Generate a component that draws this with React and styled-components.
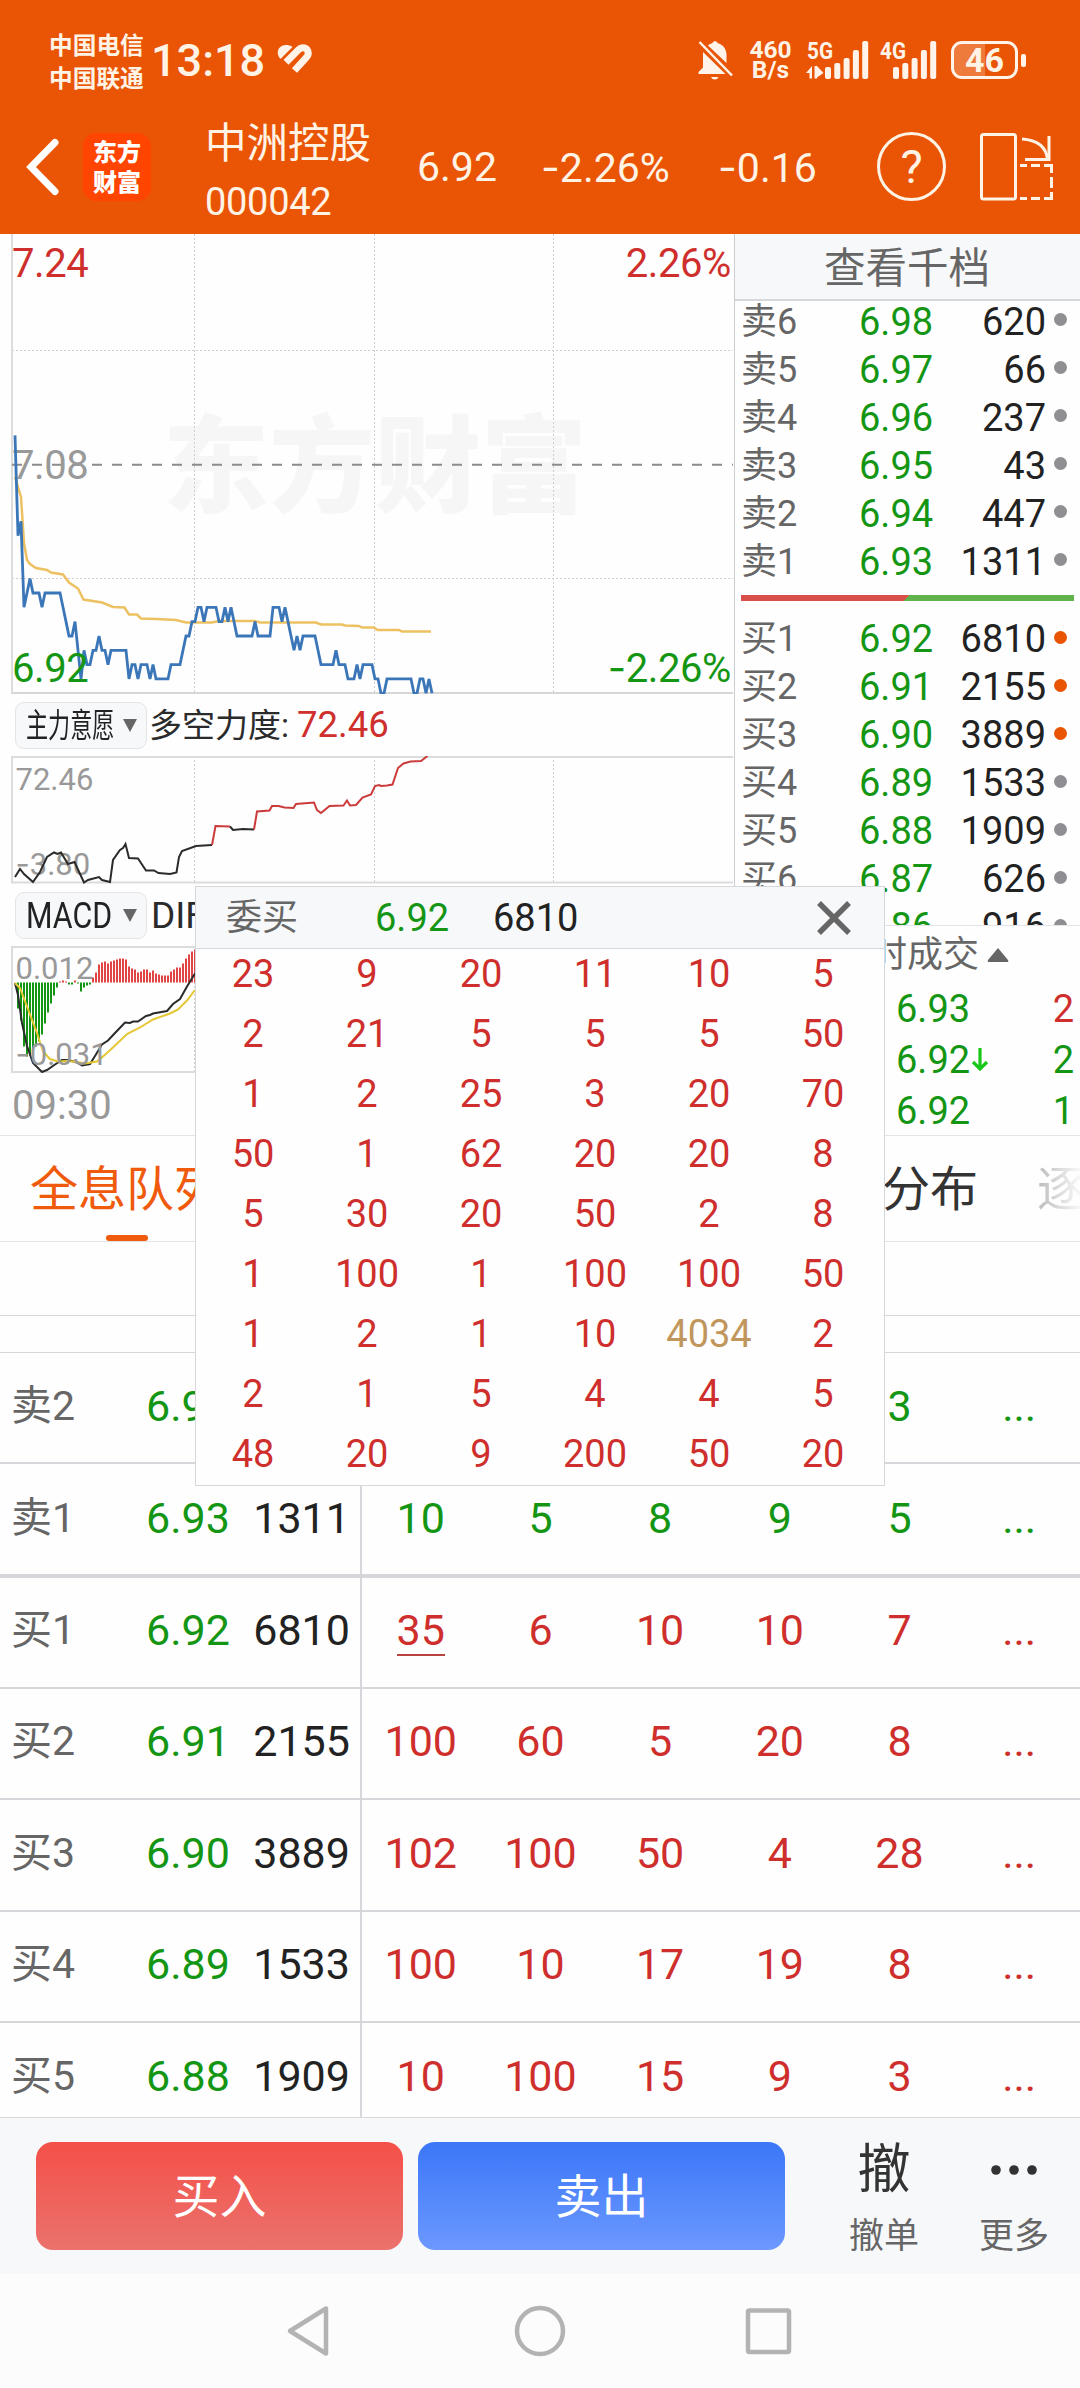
import React, { Fragment } from 'react';
import styled, { createGlobalStyle } from 'styled-components';

const GlobalStyle = createGlobalStyle`
    * { box-sizing : border-box; }
    body {
        margin : 0;
        background : #FEFEFE;
        font-family : Roboto, "Noto Sans CJK SC", sans-serif;
        line-height : 1;
    }
`

// 颜色
const RED = "#CF2F2C";
const GREEN = "#149614";
const GRAY = "#666666";
const LINE = "#D5D7DB";

// 卖盘 / 买盘
const sellList = [
    ["卖6", "6.98", "620"],
    ["卖5", "6.97", "66"],
    ["卖4", "6.96", "237"],
    ["卖3", "6.95", "43"],
    ["卖2", "6.94", "447"],
    ["卖1", "6.93", "1311"],
];
const buyList = [
    ["买1", "6.92", "6810", true],
    ["买2", "6.91", "2155", true],
    ["买3", "6.90", "3889", true],
    ["买4", "6.89", "1533"],
    ["买5", "6.88", "1909"],
    ["买6", "6.87", "626"],
    ["买7", "6.86", "916"],
];

// 全息队列
const queueList = [
    { label : "卖2", price : "6.94", vol : "447", side : "sell", items : ["12", "5", "10", "6", "3"] },
    { label : "卖1", price : "6.93", vol : "1311", side : "sell", items : ["10", "5", "8", "9", "5"], thick : true },
    { label : "买1", price : "6.92", vol : "6810", side : "buy", items : ["35", "6", "10", "10", "7"], active : 0 },
    { label : "买2", price : "6.91", vol : "2155", side : "buy", items : ["100", "60", "5", "20", "8"] },
    { label : "买3", price : "6.90", vol : "3889", side : "buy", items : ["102", "100", "50", "4", "28"] },
    { label : "买4", price : "6.89", vol : "1533", side : "buy", items : ["100", "10", "17", "19", "8"] },
    { label : "买5", price : "6.88", vol : "1909", side : "buy", items : ["10", "100", "15", "9", "3"], last : true },
];

// 弹窗里的委托明细
const orderList = [
    23, 9, 20, 11, 10, 5,
    2, 21, 5, 5, 5, 50,
    1, 2, 25, 3, 20, 70,
    50, 1, 62, 20, 20, 8,
    5, 30, 20, 50, 2, 8,
    1, 100, 1, 100, 100, 50,
    1, 2, 1, 10, 4034, 2,
    2, 1, 5, 4, 4, 5,
    48, 20, 9, 200, 50, 20,
];

// 分时价格,单位为分,每分钟一个点
const prices = [
    710, 703, 704, 698, 699, 700, 699, 699, 699, 698, 699, 699, 699, 699, 699, 699, 698, 697, 696, 696,
    697, 695, 693, 695, 694, 694, 695, 695, 696, 695, 695, 694, 695, 695, 695, 695, 695, 695, 693, 694,
    694, 693, 694, 694, 694, 693, 694, 693, 693, 693, 693, 693, 694, 694, 694, 694, 695, 696, 696, 697,
    697, 698, 698, 697, 698, 698, 698, 698, 697, 697, 698, 697, 698, 697, 696, 696, 696, 696, 696, 696,
    697, 696, 696, 696, 696, 696, 698, 698, 698, 697, 698, 697, 696, 695, 696, 695, 696, 696, 696, 696,
    696, 695, 694, 694, 694, 694, 694, 695, 694, 694, 694, 693, 693, 693, 694, 693, 694, 694, 694, 694,
    693, 693, 692, 692, 693, 693, 693, 693, 693, 693, 693, 693, 693, 692, 692, 693, 693, 692, 693, 692,
];
const pricePoints = prices.map((p, i) => `${15 + i * 3},${459.3 - (p - 692) * 14.33}`).join(" ");

// MACD 柱,正数为红
const macdBars = [
    -26, -38, -64, -74, -73, -71, -64, -59, -52, -41, -30, -21, -13, -5, 1, 2, 1, -2, -2, 2, -1, -9, -5, -3, -2,
    5, 10, 18, 20, 21, 19, 21, 22, 23, 24, 24, 23, 16, 14, 13, 10, 11, 13, 13, 10, 12, 9, 8, 7, 7, 7, 11, 13, 15,
    15, 19, 24, 28, 31, 33, 33, 32,
];

const Minus = () => <MinusText>-</MinusText>;

// 状态栏
const StatusBar = () => (
    <StatusFrame>
        <Carriers>
            <span>中国电信</span>
            <span>中国联通</span>
        </Carriers>
        <Clock>13:18</Clock>
        <svg width="38" height="32" viewBox="0 0 38 32">
            <path d="M3 14.500 C-2 8 2 1 9 1 C11.500 1 13.500 1.500 15.500 3 L4 14.500 Z" fill="#FFF3EA" />
            <path d="M9 18.200 L21.600 5.600 C24 3 28 3 30 5.500 C32 8 31.800 11 29.400 13.400 L17.500 26.500" fill="none" stroke="#FFF3EA" strokeWidth="7" />
        </svg>
        <StatusRight>
            <svg width="38" height="42" viewBox="0 0 38 42">
                <path d="M15.500 4 C16 1.500 20 1.500 20.500 4 C26 5.500 29.500 10 29.500 16 V24 L11 6.500 C12.500 5 14 4.500 15.500 4 Z" fill="#FFF3EA" />
                <path d="M6 13 L28.500 35 H1.500 V33 L6 28.500 Z" fill="#FFF3EA" />
                <path d="M2.500 3 L35 36.500" stroke="#FFF3EA" strokeWidth="2.500" />
                <path d="M14 38 H21.500 A4 4 0 0 1 14 38 Z" fill="#FFF3EA" />
            </svg>
            <NetSpeed>
                <span>460</span>
                <span>B/s</span>
            </NetSpeed>
            <Signal type="5G" arrows />
            <Signal type="4G" />
            <Battery>
                <BatteryFill />
                <BatteryText>46</BatteryText>
            </Battery>
            <BatteryTip />
        </StatusRight>
    </StatusFrame>
);

const Signal = ({ type, arrows }) => (
    <SignalIcon width={arrows ? 62 : 56} height="40" $gap={arrows ? 12 : 0}>
        <text x={arrows ? 1 : 0} y="19" fontSize="24" fontWeight="700" fill="#FFF3EA" textLength="26" lengthAdjust="spacingAndGlyphs">{type}</text>
        {arrows && <path d="M0 33 L6 26 V38.500 H3.500 V33 Z M8.500 26 H11 L17.500 33 L11 37.500 V38.500 H8.500 Z" fill="#FFF3EA" />}
        {[27, 23, 18, 10, 1].map((top, i) => (
            <rect key={top} x={(arrows ? 19 : 13) + i * 9.3} y={top} width="6" height={39 - top} rx="2" fill="#FFF3EA" />
        ))}
    </SignalIcon>
);

// 顶部标题栏
const TitleBar = () => (
    <TitleFrame>
        <svg width="36" height="60" viewBox="0 0 36 60">
            <path d="M30 5.500 L6 30 L30 54.500" fill="none" stroke="#FFF" strokeWidth="7" strokeLinecap="round" />
        </svg>
        <Logo>
            <span>东方</span>
            <span>财富</span>
        </Logo>
        <StockName>
            <Name>中洲控股</Name>
            <Code>000042</Code>
        </StockName>
        <Quote $w={124}>6.92</Quote>
        <Quote $w={177}><Minus />2.26%</Quote>
        <Quote $w={159}><Minus />0.16</Quote>
        <HelpIcon>?</HelpIcon>
        <svg width="76" height="70" viewBox="0 0 76 70" fill="none" stroke="#FFF3E6" strokeWidth="3">
            <rect x="2.500" y="2.500" width="34" height="64.500" rx="2" />
            <path d="M43 7 C58 8 67 15 68.500 27" />
            <path d="M70 4 V27.500 H46" />
            <path d="M41 33.500 H48 M52 33.500 H61 M65 33.500 H72.500 V41 M72.500 45 V56 M72.500 60 V66.500 H65 M61 66.500 H52 M48 66.500 H41" />
        </svg>
    </TitleFrame>
);

const GridLines = ({ height }) => (
    <g stroke="#CFCFCF" strokeWidth="1" strokeDasharray="2 2">
        <path d={`M194.500 0 V${height} M374.500 0 V${height} M553.500 0 V${height}`} />
    </g>
);

// 分时图
const PriceChart = () => (
    <Chart width="734" height="460" viewBox="0 0 734 460">
        <Watermark x="375" y="270" textAnchor="middle">东方财富</Watermark>
        <GridLines height={459} />
        <path d="M12 116.500 H733 M12 344.500 H733" stroke="#CFCFCF" strokeDasharray="2 2" />
        <path d="M12 0 V460" stroke="#DCDCDC" strokeWidth="2" />
        <path d="M12 459 H733" stroke="#D6D6D6" strokeWidth="2" />
        <path d="M12 230.700 H733" stroke="#8C8C8C" strokeWidth="2" strokeDasharray="10 10" />
        <AxisText x="12" y="42.500" fill={RED}>7.24</AxisText>
        <AxisText x="12" y="245" fill="#999">7.08</AxisText>
        <AxisText x="731" y="42.500" fill={RED} textAnchor="end">2.26%</AxisText>
        <polyline
            points="15,243 18,253 21,263 24,309 27,326 30,330 36,334 47,336 51,338.500 63,340.500 69,348.500 78,354.500 83.500,365.500 102,368.500 113,373 124.500,373.500 129,380.500 137,380.500 141,384.500 156,385 176,386 186,388.500 212,388.500 219,387 255,387 260,388.500 316,388.500 321,390.500 342,390.500 345,391.500 359,392 362,393.500 374,393.500 377.500,396 399,396 402,397.500 431,397.500"
            fill="none" stroke="#EDC161" strokeWidth="2.500"
        />
        <polyline points={pricePoints} fill="none" stroke="#3B76B8" strokeWidth="2.800" />
        <AxisText x="12" y="447.500" fill={GREEN}>6.92</AxisText>
        <AxisText x="731" y="447.500" fill={GREEN} textAnchor="end"><tspan fontFamily="Inter">-</tspan>2.26%</AxisText>
    </Chart>
);

// 多空力度
const ForceChart = () => (
    <Chart width="734" height="128" viewBox="0 0 734 128">
        <GridLines height={127} />
        <path d="M733 1 H12 V126.500 H733" fill="none" stroke="#DCDCDC" strokeWidth="2" />
        <AxisText x="15.500" y="33.500" $small fill="#999">72.46</AxisText>
        <AxisText x="15.500" y="119" $small fill="#999"><tspan fontFamily="Inter">-</tspan>3.80</AxisText>
        <g fill="none" stroke="#2B2B2B" strokeWidth="2">
            <polyline points="15,121 20,113 24,118 33,126 40,116 47,101 54,96.500 57.500,98 61,96.500 68,108 74.500,106 84,126.500 88,124 99,121 102,124 110,126 113,104 120,94 123,92 125.500,88 129,102 138,102.500 146,114.500 154,114.500 158.500,117 170,118 176.500,116.500 179,101 182,95 196,90 212,89" />
            <polyline points="230,70.500 233,74 243,73 254,73.500" />
        </g>
        <g fill="none" stroke="#CC3B3B" strokeWidth="2">
            <polyline points="212,89 215.500,70 230,70.500" />
            <polyline points="254,73.500 257,55.500 269.500,54.500 272,50 278.500,50 284.500,51.500 293.500,52 296,48 314,46.500 317,54 321,57 329.500,50 343.500,49.500 347,44.500 350,49.500 356,49 362.500,41.500 371,38.500 375,30 379,29 381,30 387,29.500 392.500,28.500 398,12 403.500,7.500 410.500,5.500 421,5 427.500,0" />
        </g>
    </Chart>
);

// MACD
const MacdChart = () => (
    <Chart width="734" height="127" viewBox="0 0 734 127">
        <GridLines height={126} />
        <path d="M733 1 H12 V126 H733" fill="none" stroke="#DCDCDC" strokeWidth="2" />
        {macdBars.map((v, i) => (
            <rect key={i} x={17 + i * 3} y={v > 0 ? 36.5 - v : 36.5} width="2" height={Math.abs(v)} fill={v > 0 ? "#E04444" : GREEN} />
        ))}
        <polyline points="15,37 18,49 22,77 27,100 33,117 42,126 47,124 55,118.500 62,114 68,114 77,116.500 82,119.500 90,118 95,110 102,98.500 108,94.500 115,87 125,76.500 130,77 133,75.500 138,75.500 146,70 150,69 153,67.500 167,65 173,58 180,53 187,40.500 195,27.500" fill="none" stroke="#2B2B2B" strokeWidth="2" />
        <polyline points="15,37 20,42 27,60.500 37,87 43,105.500 50,113 58,115.500 67,115 77,116 85,117.500 97,115.500 107,107 115,99.500 127,88 140,81.500 153,73.500 170,67.500 178,63.500 187,54.500 195,44" fill="none" stroke="#E6C733" strokeWidth="2" />
        <AxisText x="15.500" y="32.500" $small fill="#999">0.012</AxisText>
        <AxisText x="15.500" y="119" $small fill="#999"><tspan fontFamily="Inter">-</tspan>0.031</AxisText>
    </Chart>
);

// 指标选择按钮
const IndicatorButton = ({ text, scale }) => (
    <PickButton>
        <PickText $scale={scale}>{text}</PickText>
        <svg width="14" height="13" viewBox="0 0 14 13"><path d="M0 0 H14 L7 13 Z" fill={GRAY} /></svg>
    </PickButton>
);

const PriceRow = ({ row }) => (
    <RowFrame>
        <RowLabel>{row[0]}</RowLabel>
        <RowPrice>{row[1]}</RowPrice>
        <RowVol>{row[2]}</RowVol>
        <Dot $on={row[3]} />
    </RowFrame>
);

// 右侧五档
const DepthPanel = () => (
    <DepthFrame>
        <DepthHeader>查看千档</DepthHeader>
        <DepthList>
            {sellList.map((row) => <PriceRow key={row[0]} row={row} />)}
            <RatioBar />
            {buyList.map((row) => <PriceRow key={row[0]} row={row} />)}
        </DepthList>
        <DealFrame>
            <DealTitle>
                分时成交
                <svg width="22" height="14" viewBox="0 0 22 14"><path d="M11 0 L21 12 Q22 14 20 14 H2 Q0 14 1 12 Z" fill={GRAY} /></svg>
            </DealTitle>
            <DealRow><DealPrice>6.93</DealPrice><DealVol $color={RED}>2</DealVol></DealRow>
            <DealRow>
                <DealPrice>
                    6.92
                    <svg width="18" height="24" viewBox="0 0 18 24"><path d="M9 0 V21 M2 14 L9 21 L16 14" fill="none" stroke="#18C818" strokeWidth="3.200" /></svg>
                </DealPrice>
                <DealVol $color={GREEN}>2</DealVol>
            </DealRow>
            <DealRow><DealPrice>6.92</DealPrice><DealVol $color={GREEN}>1</DealVol></DealRow>
        </DealFrame>
    </DepthFrame>
);

// 委买明细弹窗
const OrderPopup = () => (
    <PopupFrame>
        <PopupHeader>
            <PopupTitle>委买</PopupTitle>
            <PopupPrice>6.92</PopupPrice>
            <PopupVol>6810</PopupVol>
            <svg width="34" height="34" viewBox="0 0 34 34"><path d="M2 2 L32 32 M32 2 L2 32" stroke={GRAY} strokeWidth="5.500" /></svg>
        </PopupHeader>
        <OrderGrid>
            {orderList.map((n, i) => <OrderCell key={i} $big={n > 1000}>{n}</OrderCell>)}
        </OrderGrid>
    </PopupFrame>
);

const QueueRow = ({ row }) => (
    <QueueFrame $thick={row.thick} $last={row.last} $side={row.side}>
        <QueueLeft>
            <QueueLabel>{row.label}</QueueLabel>
            <QueuePrice>{row.price}</QueuePrice>
            <QueueVol>{row.vol}</QueueVol>
        </QueueLeft>
        {row.items.map((n, i) => (
            <QueueCell key={i} $side={row.side}>
                {row.active === i ? <ActiveNum>{n}</ActiveNum> : n}
            </QueueCell>
        ))}
        <QueueCell $side={row.side}>...</QueueCell>
    </QueueFrame>
);

const App = () => {
    return (
        <Fragment>
            <GlobalStyle />
            <Page>
                <Header>
                    <StatusBar />
                    <TitleBar />
                </Header>

                {/* 图表 + 五档 */}
                <Main>
                    <ChartColumn>
                        <PriceChart />
                        <IndicatorBar>
                            <IndicatorButton text="主力意愿" scale={0.67} />
                            <IndicatorText>多空力度:</IndicatorText>
                            <IndicatorValue>72.46</IndicatorValue>
                        </IndicatorBar>
                        <ForceChart />
                        <IndicatorBar>
                            <IndicatorButton text="MACD" scale={0.82} />
                            <IndicatorText $latin>DIF</IndicatorText>
                        </IndicatorBar>
                        <MacdChart />
                        <TimeText>09:30</TimeText>
                    </ChartColumn>
                    <DepthPanel />
                </Main>

                {/* 标签页 */}
                <Tabs>
                    <Tab $active>全息队列</Tab>
                    <Tab>分布</Tab>
                    <FadeTab>逐</FadeTab>
                </Tabs>
                <Blank $h={74} />
                <Blank $h={37} />

                <QueueList>
                    {queueList.map((row) => <QueueRow key={row.label} row={row} />)}
                </QueueList>

                {/* 底部操作 */}
                <BottomBar>
                    <TradeButton $from="#F45048" $to="#EB726D">买入</TradeButton>
                    <TradeButton $from="#3B77F8" $to="#6C98FF">卖出</TradeButton>
                    <Action $w={200}>
                        <ActionIcon>撤</ActionIcon>
                        <ActionText>撤单</ActionText>
                    </Action>
                    <Action $w={60}>
                        <ActionIcon>
                            <svg width="46" height="10" viewBox="0 0 46 10" fill="#333">
                                <circle cx="5" cy="5" r="4.800" /><circle cx="23" cy="5" r="4.800" /><circle cx="41" cy="5" r="4.800" />
                            </svg>
                        </ActionIcon>
                        <ActionText>更多</ActionText>
                    </Action>
                </BottomBar>
                <NavBar>
                    <svg width="506" height="52" viewBox="0 0 506 52" fill="none" stroke="#B3B3B3" strokeWidth="4.500" strokeLinejoin="round">
                        <path d="M40 3.500 V48.500 L4 26 Z" />
                        <circle cx="254" cy="26" r="23" />
                        <rect x="462" y="5.500" width="41" height="41.500" rx="1.500" />
                    </svg>
                </NavBar>
                <OrderPopup />
            </Page>
        </Fragment>
    );
};

// Frame
const Page = styled.div`
    position : relative;
    display : flex;
    flex-direction : column;
    width : 1080px;
    height : 2388px;
    overflow : hidden;
    background : #FEFEFE;
`
const Header = styled.div`
    height : 234px;
    flex-shrink : 0;
    background : #E95504;
    color : #FFF3E6;
`

// 状态栏
const StatusFrame = styled.div`
    display : flex;
    height : 98px;
    padding : 22px 54px 0px 49px;
    align-items : center;
`
const Carriers = styled.div`
    display : flex;
    flex-direction : column;
    width : 102px;
    padding-top : 7px;
    gap : 9.5px;
    font-size : 23.7px;
    font-weight : 700;
    white-space : nowrap;
`
const Clock = styled.div`
    width : 126px;
    font-size : 45px;
    font-weight : 500;
`
const StatusRight = styled.div`
    display : flex;
    margin-left : auto;
    align-items : center;
`
const NetSpeed = styled.div`
    display : flex;
    flex-direction : column;
    width : 71px;
    align-items : center;
    font-size : 24.5px;
    font-weight : 700;
    line-height : 20px;
`
const SignalIcon = styled.svg`
    margin-right : ${(props) => props.$gap}px;
    overflow : visible;
`
const Battery = styled.div`
    position : relative;
    display : flex;
    width : 67px;
    height : 38px;
    margin-left : 15px;
    border : 3px solid #FFF3EA;
    border-radius : 11px;
    align-items : center; justify-content : center;
    overflow : hidden;
`
const BatteryFill = styled.div`
    position : absolute;
    left : 0px; top : 0px;
    width : 31px;
    height : 100%;
    background : rgba(255, 255, 255, 0.22);
`
const BatteryText = styled.span`
    position : relative;
    font-size : 34px;
    font-weight : 700;
`
const BatteryTip = styled.div`
    width : 5px;
    height : 13px;
    margin-left : 3px;
    border-radius : 2px;
    background : #FFF3EA;
`

// 标题栏
const TitleFrame = styled.div`
    display : flex;
    height : 136px;
    padding-left : 25px;
    padding-top : 1px;
    align-items : center;
`
const MinusText = styled.span`
    font-family : Inter, sans-serif;
`
const Logo = styled.div`
    display : flex;
    flex-direction : column;
    width : 68px;
    height : 68px;
    margin-left : 22px;
    padding-top : 2px;
    border-radius : 14px;
    background : #FF4500;
    color : #FFF;
    align-items : center; justify-content : center;
    gap : 6px;
    font-size : 24px;
    font-weight : 900;
`
const StockName = styled.div`
    display : flex;
    flex-direction : column;
    width : 266px;
    padding : 11px 0px 0px 54px;
    gap : 18px;
`
const Name = styled.div`
    font-size : 41.5px;
    white-space : nowrap;
`
const Code = styled.div`
    font-size : 38px;
    letter-spacing : -0.3px;
`
const Quote = styled.div`
    width : ${(props) => props.$w}px;
    padding-top : 2px;
    font-size : 41px;
    white-space : nowrap;
`
const HelpIcon = styled.div`
    display : flex;
    width : 69px;
    height : 69px;
    margin-right : 33px;
    border : 3px solid #FFF3E6;
    border-radius : 50%;
    align-items : center; justify-content : center;
    font-size : 47px;
`

// 图表区域
const Main = styled.div`
    display : flex;
    height : 902px;
    flex-shrink : 0;
    border-bottom : 1px solid #E2E4E7;
`
const ChartColumn = styled.div`
    width : 735px;
    border-right : 1px solid #CBCCD0;
`
const Chart = styled.svg`
    display : block;
`
const AxisText = styled.text`
    font-size : ${(props) => props.$small ? 31 : 40}px;
    letter-spacing : ${(props) => props.$small ? 0 : -0.4}px;
`
const Watermark = styled.text`
    font-size : 106px;
    font-weight : 900;
    fill : #F6F6F7;
`
const IndicatorBar = styled.div`
    display : flex;
    height : 62px;
    padding-left : 15px;
    align-items : center;
`
const PickButton = styled.div`
    display : flex;
    width : 132px;
    height : 47px;
    padding : 0px 9px 0px 10px;
    border : 1px solid #E3E5E8;
    border-radius : 9px;
    background : #F7F8FA;
    align-items : center; justify-content : space-between;
`
const PickText = styled.div`
    width : 86px;
    font-size : ${(props) => props.$scale < 0.7 ? 33 : 37}px;
    color : #222;
    white-space : nowrap;
    transform : scaleX(${(props) => props.$scale});
    transform-origin : left center;
`
const IndicatorText = styled.div`
    margin-left : ${(props) => props.$latin ? 4 : 2}px;
    font-size : ${(props) => props.$latin ? 37 : 33}px;
    color : #2B2B2B;
`
const IndicatorValue = styled.div`
    margin-left : 8px;
    font-size : 36.5px;
    color : ${RED};
`
const TimeText = styled.div`
    padding : 12.5px 0px 0px 12px;
    font-size : 40px;
    color : #999;
`

// 五档
const DepthFrame = styled.div`
    display : flex;
    flex-direction : column;
    width : 345px;
`
const DepthHeader = styled.div`
    display : flex;
    height : 67px;
    flex-shrink : 0;
    border-bottom : 2px solid ${LINE};
    background : #F7F8FA;
    padding : 4px 0px 0px 89px;
    align-items : center;
    font-size : 41.5px;
    color : ${GRAY};
`
const DepthList = styled.div`
    height : 625px;
    flex-shrink : 0;
    border-bottom : 1px solid #E2E4E7;
    overflow : hidden;
    & > :first-child { margin-top : -4px; }
`
const RowFrame = styled.div`
    display : flex;
    height : 48px;
    padding : 1px 13px 0px 6px;
    align-items : center;
    font-size : 38px;
`
const RowLabel = styled.div`
    width : 118px;
    font-size : 36px;
    color : ${GRAY};
`
const RowPrice = styled.div`
    width : 90px;
    color : ${GREEN};
`
const RowVol = styled.div`
    width : 97px;
    text-align : right;
    color : #222;
`
const Dot = styled.div`
    width : 13px;
    height : 13px;
    margin : 0px 0px 4px auto;
    border-radius : 50%;
    background : ${(props) => props.$on ? "#E95504" : "#8E8E93"};
`
const RatioBar = styled.div`
    height : 6px;
    margin : 10px 6px 13.5px 6px;
    background : linear-gradient(130deg, #D84F4A 49.7%, #5FB34A 49.7%);
`
const DealFrame = styled.div`
    display : flex;
    flex-direction : column;
    padding-top : 1px;
`
const DealTitle = styled.div`
    display : flex;
    height : 56px;
    padding-left : 100px;
    align-items : center;
    gap : 8px;
    font-size : 36px;
    color : ${GRAY};
`
const DealRow = styled.div`
    display : flex;
    height : 51px;
    padding : 0px 6px 0px 161px;
    align-items : center; justify-content : space-between;
    font-size : 38px;
`
const DealPrice = styled.div`
    display : flex;
    align-items : center;
    gap : 1px;
    color : ${GREEN};
`
const DealVol = styled.div`
    color : ${(props) => props.$color};
`

// 标签页
const Tabs = styled.div`
    display : flex;
    height : 106px;
    flex-shrink : 0;
    border-bottom : 1px solid #E2E4E7;
    padding-left : 30px;
`
const Tab = styled.div`
    position : relative;
    display : flex;
    width : ${(props) => props.$active ? 852 : 155}px;
    padding-top : 3px;
    align-items : center;
    font-size : 48px;
    color : ${(props) => props.$active ? "#F05A0C" : "#333"};
    white-space : nowrap;
    &::after {
        content : "";
        display : ${(props) => props.$active ? "block" : "none"};
        position : absolute;
        left : 76px; bottom : 0px;
        width : 42px;
        height : 6px;
        border-radius : 3px;
        background : #F05A0C;
    }
`
const FadeTab = styled(Tab)`
    width : 43px;
    overflow : hidden;
    color : transparent;
    background : linear-gradient(90deg, #BBB 0%, #F5F5F5 95%);
    background-clip : text;
`
const Blank = styled.div`
    height : ${(props) => props.$h}px;
    flex-shrink : 0;
    border-bottom : 1px solid ${LINE};
`

// 全息队列
const QueueList = styled.div`
    height : 764px;
    flex-shrink : 0;
    overflow : hidden;
`
const QueueFrame = styled.div`
    display : flex;
    height : ${(props) => props.$thick ? 113.5 : 111.3}px;
    padding-top : ${(props) => props.$side === "sell" ? 2 : 0}px;
    border-bottom : ${(props) => props.$last ? 0 : props.$thick ? 4 : 2}px solid ${LINE};
    font-size : 43px;
`
const QueueLeft = styled.div`
    display : flex;
    width : 362px;
    border-right : 2px solid ${LINE};
    padding : 0px 10px 4px 11px;
    align-items : center;
`
const QueueLabel = styled.div`
    width : 135px;
    font-size : 41px;
    color : ${GRAY};
`
const QueuePrice = styled.div`
    width : 84px;
    color : ${GREEN};
`
const QueueVol = styled.div`
    margin-left : auto;
    color : #222;
`
const QueueCell = styled.div`
    display : flex;
    width : 119.7px;
    padding : 0px 2px 4px 0px;
    align-items : center; justify-content : center;
    color : ${(props) => props.$side === "sell" ? GREEN : RED};
`
const ActiveNum = styled.span`
    height : 47px;
    border-bottom : 2px solid #B84442;
    margin-bottom : -4px;
`

// 弹窗
const PopupFrame = styled.div`
    position : absolute;
    left : 195px; top : 886px;
    width : 690px;
    height : 600px;
    border : 1px solid ${LINE};
    background : #FEFEFE;
`
const PopupHeader = styled.div`
    display : flex;
    height : 62px;
    border-bottom : 1px solid ${LINE};
    padding : 0px 33px 0px 30px;
    background : #F7F8FA;
    align-items : center;
    font-size : 38px;
    & > svg { margin-left : auto; }
`
const PopupTitle = styled.div`
    width : 149px;
    padding-top : 1px;
    font-size : 36px;
    color : ${GRAY};
`
const PopupPrice = styled.div`
    width : 118px;
    color : ${GREEN};
`
const PopupVol = styled.div`
    color : #222;
`
const OrderGrid = styled.div`
    display : grid;
    grid-template-columns : repeat(6, 114px);
    grid-auto-rows : 60px;
    margin-top : -5px;
`
const OrderCell = styled.div`
    display : flex;
    align-items : center; justify-content : center;
    font-size : 38px;
    color : ${(props) => props.$big ? "#C1965C" : RED};
`

// 底部操作
const BottomBar = styled.div`
    display : flex;
    height : 157px;
    flex-shrink : 0;
    border-top : 1px solid ${LINE};
    padding : 24px 0px 0px 36px;
    background : #F7F8FA;
`
const TradeButton = styled.div`
    display : flex;
    width : 367px;
    height : 108px;
    margin-right : 15px;
    border-radius : 17px;
    background : linear-gradient(180deg, ${(props) => props.$from}, ${(props) => props.$to});
    align-items : center; justify-content : center;
    font-size : 47px;
    color : #FFF;
`
const Action = styled.div`
    display : flex;
    flex-direction : column;
    width : ${(props) => props.$w}px;
    margin-left : ${(props) => props.$w === 200 ? -16 : 0}px;
    align-items : center;
`
const ActionIcon = styled.div`
    display : flex;
    height : 54px;
    padding-top : 2px;
    align-items : center;
    font-size : 53px;
    color : #333;
`
const ActionText = styled.div`
    margin-top : 22.5px;
    font-size : 35px;
    white-space : nowrap;
    color : ${GRAY};
`
const NavBar = styled.div`
    display : flex;
    height : 114px;
    flex-shrink : 0;
    padding-left : 286px;
    background : #FCFCFC;
    align-items : center;
`

export default App;
